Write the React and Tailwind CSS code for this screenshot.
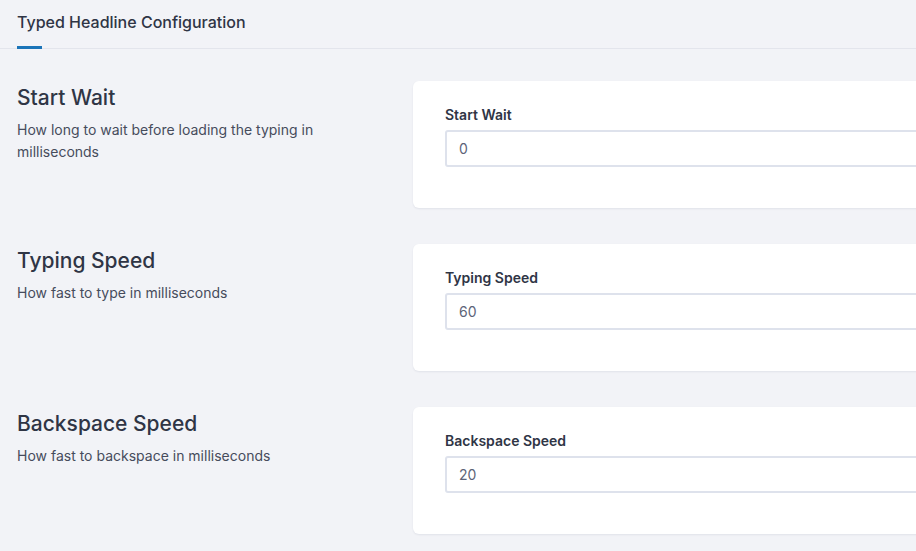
import React from 'react';

const settings = [
  { title: 'Start Wait', desc: 'How long to wait before loading the typing in milliseconds', value: '0' },
  { title: 'Typing Speed', desc: 'How fast to type in milliseconds', value: '60' },
  { title: 'Backspace Speed', desc: 'How fast to backspace in milliseconds', value: '20' },
];

function SettingRow({ title, desc, value }) {
  return (
    <div className="flex">
      <div className="w-[396px] shrink-0 pt-[4px] pr-[60px]">
        <h2 className="text-[21px] leading-[26px] font-medium text-[#2f3545]">{title}</h2>
        <p className="mt-[8px] text-[14px] leading-[22px] text-[#464c5c]">{desc}</p>
      </div>
      <div className="w-[600px] shrink-0 bg-white rounded-[6px] shadow-[0_1px_2px_rgba(30,40,80,0.08)] pt-[26px] pb-[41px] px-[32px]">
        <label className="block text-[14px] leading-[16px] font-semibold text-[#2f3545]">{title}</label>
        <input
          type="text"
          defaultValue={value}
          className="mt-[7px] w-full h-[37px] rounded-[3px] border-2 border-[#dee2ec] px-[12px] text-[14px] text-[#5d6478] outline-none"
        />
      </div>
    </div>
  );
}

export default function App() {
  return (
    <div className="w-[916px] h-[551px] overflow-hidden bg-[#f2f3f7] font-['Inter','Noto_Sans',sans-serif]">
      <div className="pl-[17px] border-b border-[#e3e5ec]">
        <div className="inline-block pt-[12px] pb-[16px] relative">
          <span className="block text-[16px] leading-[20px] font-medium text-[#2f3545]">Typed Headline Configuration</span>
          <div className="absolute left-0 -bottom-[1px] w-[25px] h-[3px] bg-[#1b74b8]" />
        </div>
      </div>
      <div className="pl-[17px] pt-[32px] flex flex-col gap-[36px]">
        {settings.map((s) => (
          <SettingRow key={s.title} {...s} />
        ))}
      </div>
    </div>
  );
}
